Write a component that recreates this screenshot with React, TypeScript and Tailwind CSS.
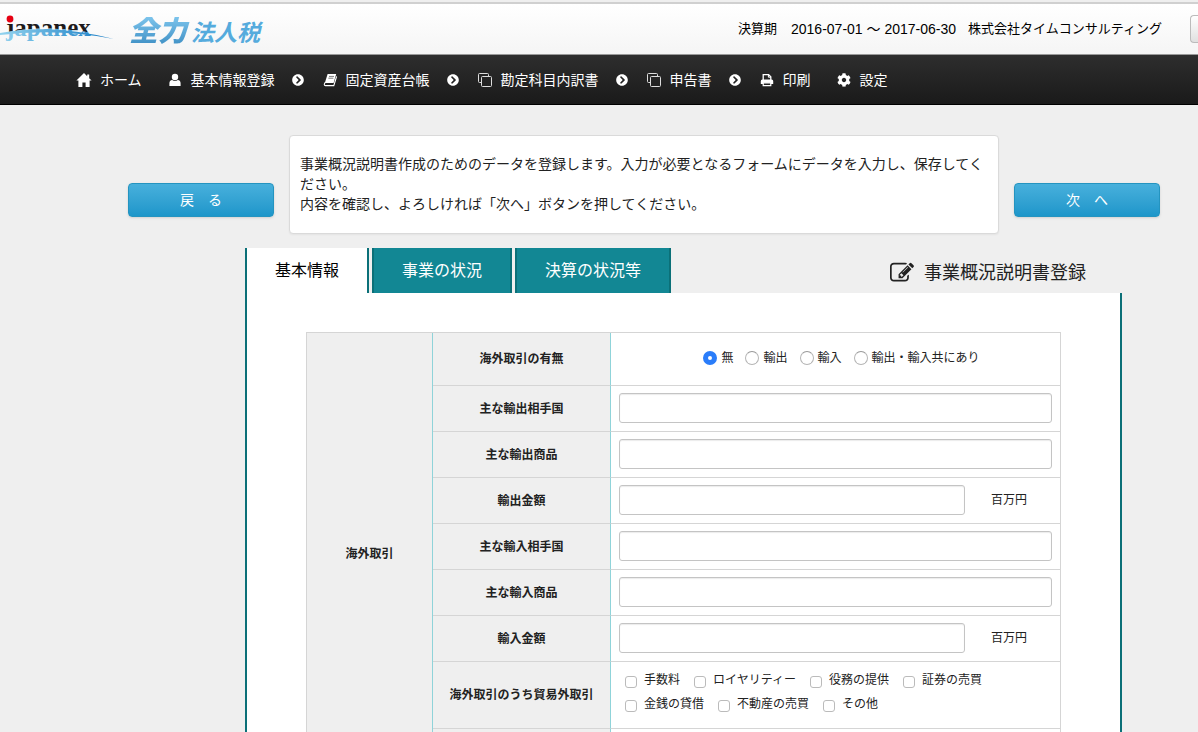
import React, { useState } from "react";
import { FaChevronCircleRight, FaCog } from "react-icons/fa";

const HomeIcon = () => (
  <svg viewBox="0 0 14 14" className="w-[14px] h-[14px] shrink-0 overflow-visible" fill="currentColor">
    <path d="M7 0 L-.6 7.6 H1.4 V14 H5.4 V9.4 H8.6 V14 H12.6 V7.6 H14.6 L12.2 5.2 V1.4 H10.2 V3.2 Z" />
  </svg>
);

const UserIcon = () => (
  <svg viewBox="0 0 14 14" className="w-[14px] h-[14px] shrink-0" fill="currentColor">
    <circle cx="7" cy="4" r="3.2" />
    <path d="M1.4 13 V10.4 Q1.4 7.4 4.2 7 Q7 9 9.8 7 Q12.6 7.4 12.6 10.4 V13 Z" />
  </svg>
);

const BookIcon = () => (
  <svg viewBox="0 0 14 14" className="w-[14px] h-[14px] shrink-0">
    <path d="M4.6 1 H13.2 L10.6 10 H1.8 Z" fill="currentColor" />
    <path d="M6 3.4 H11 M5.4 5.2 H10.4" stroke="#222" strokeWidth=".6" />
    <path d="M2 9.4 Q.4 12.6 2.4 12.6 H10.8 L13.6 3.4" fill="none" stroke="currentColor" strokeWidth="1.1" />
  </svg>
);

const CopyIcon = () => (
  <svg viewBox="0 0 14 14" className="w-[14px] h-[14px] shrink-0" fill="none" stroke="#ddd" strokeWidth="1">
    <rect x="3.5" y="3.5" width="10" height="10" rx="1" />
    <path d="M3.5 9.5 H1.5 Q.5 9.5 .5 8.5 V1.5 Q.5 .5 1.5 .5 H9.5 Q10.5 .5 10.5 1.5 V3.5" />
  </svg>
);

const PrintIcon = () => (
  <svg viewBox="0 0 14 14" className="w-[14px] h-[14px] shrink-0">
    <path d="M3.2 7 V1.6 H8.6 L10.8 3.8 V7" fill="none" stroke="currentColor" strokeWidth="1.3" />
    <path d="M8.4 1.4 V4.2 H11" fill="none" stroke="currentColor" strokeWidth="1" />
    <path d="M.8 11 V8 Q.8 6.4 2.4 6.4 H11.6 Q13.2 6.4 13.2 8 V11 Z" fill="currentColor" />
    <path d="M3.2 9.8 H10.8 V12.6 H3.2 Z" fill="#222" stroke="currentColor" strokeWidth="1.2" />
  </svg>
);

const EditIcon = () => (
  <svg viewBox="0 0 1792 1792" className="w-6 h-6 shrink-0" fill="currentColor">
    <path d="M888 1184l116-116-152-152-116 116v56h96v96h56zm440-720q-16-16-33 1l-350 350q-17 17-1 33t33-1l350-350q17-17 1-33zm80 594v190q0 119-84.5 203.5t-203.5 84.5h-832q-119 0-203.5-84.5t-84.5-203.5v-832q0-119 84.5-203.5t203.5-84.5h832q63 0 117 25 15 7 18 23 3 17-9 29l-49 49q-14 14-32 8-23-6-45-6h-832q-66 0-113 47t-47 113v832q0 66 47 113t113 47h832q66 0 113-47t47-113v-126q0-13 9-22l64-64q15-15 35-7t20 29zm-96-738l288 288-672 672h-288v-288zm444 132l-92 92-288-288 92-92q28-28 68-28t68 28l152 152q28 28 28 68t-28 68z" />
  </svg>
);

// Upper half of the word is black, the part under the wave is blue
const JapanexLogo = () => (
  <svg viewBox="0 0 116 40" className="w-[116px] h-10 shrink-0" role="img" aria-label="japanex">
    <defs>
      <linearGradient id="wave" gradientUnits="userSpaceOnUse" x1="0" y1="0" x2="100" y2="0">
        <stop offset="0" stopColor="#93d3ee" />
        <stop offset="1" stopColor="#2183c8" />
      </linearGradient>
      <clipPath id="above">
        <path d="M0 0 H116 V30 Q55 12 0 25 Z" />
      </clipPath>
      <clipPath id="below">
        <path d="M0 25 Q55 12 116 30 V40 H0 Z" />
      </clipPath>
    </defs>
    <g fontFamily="'Liberation Serif', serif" fontWeight="bold" fontSize="25">
      <text x="6" y="27" fill="#1d1a1b" clipPath="url(#above)">japanex</text>
      <text x="6" y="27" fill="url(#wave)" clipPath="url(#below)" aria-hidden="true">japanex</text>
    </g>
    <path d="M0 24 Q52 14 114 30 Q58 19 0 26 Z" fill="url(#wave)" />
    <circle cx="10" cy="10" r="3.4" fill="#e60012" />
  </svg>
);

const navItems = [
  { label: "ホーム", icon: <HomeIcon />, arrow: false },
  { label: "基本情報登録", icon: <UserIcon />, arrow: true },
  { label: "固定資産台帳", icon: <BookIcon />, arrow: true },
  { label: "勘定科目内訳書", icon: <CopyIcon />, arrow: true },
  { label: "申告書", icon: <CopyIcon />, arrow: true },
  { label: "印刷", icon: <PrintIcon />, arrow: false },
  { label: "設定", icon: <FaCog className="w-[14px] h-[14px] shrink-0" />, arrow: false },
];

const tabs = ["基本情報", "事業の状況", "決算の状況等"];

const textRows = [
  { id: "exportCountry", label: "主な輸出相手国", unit: "" },
  { id: "exportItem", label: "主な輸出商品", unit: "" },
  { id: "exportAmount", label: "輸出金額", unit: "百万円" },
  { id: "importCountry", label: "主な輸入相手国", unit: "" },
  { id: "importItem", label: "主な輸入商品", unit: "" },
  { id: "importAmount", label: "輸入金額", unit: "百万円" },
];

const tradeOptions = ["無", "輸出", "輸入", "輸出・輸入共にあり"];

const nonTradeOptions = [
  ["手数料", "ロイヤリティー", "役務の提供", "証券の売買"],
  ["金銭の貸借", "不動産の売買", "その他"],
];

const thClass = "bg-[#efefef] border-b border-[#d5d5d5] border-r border-r-[#8fd3d9] text-center font-bold";
const tdClass = "border-b border-[#d5d5d5] border-r";

const StepButton: React.FC<{ children: React.ReactNode }> = ({ children }) => (
  <button className="w-full h-[34px] mt-12 rounded border border-[#2494c0] bg-linear-to-b from-[#47b0dc] to-[#1c96ca] text-sm text-white shadow-sm whitespace-pre">
    {children}
  </button>
);

const App: React.FC = () => {
  const [trade, setTrade] = useState("無");
  const [activeTab, setActiveTab] = useState("基本情報");

  return (
    <div className="min-h-screen bg-[#efefef] text-[#222] font-['Liberation_Sans','Noto_Sans_CJK_JP',sans-serif]">
      {/* Header */}
      <header className="pt-[2px]">
        <div className="h-[53px] border-t-2 border-t-[#d0d0d0] border-b border-b-[#999] bg-linear-to-b from-white to-[#f5f5f5] flex items-center justify-between overflow-hidden">
          <div className="flex items-center gap-[13px]">
            <JapanexLogo />
            <div className="flex items-baseline pt-1 italic font-bold leading-none">
              <span className="pr-1 text-[29px] font-black bg-linear-to-b from-[#7cc4ec] to-[#3d8fc4] bg-clip-text text-transparent">全力</span>
              <span className="pr-2 text-[23px] text-[#55abdd]">法人税</span>
            </div>
          </div>
          <div className="flex items-center text-[13px] text-black whitespace-nowrap">
            <span className="mr-[14px]">決算期</span>
            <span className="mr-3 text-sm">2016-07-01 ～ 2017-06-30</span>
            <span className="mr-7">株式会社タイムコンサルティング</span>
            <button aria-label="メニュー" className="w-2 h-7 rounded-l border border-r-0 border-[#bbb] bg-linear-to-b from-white to-[#e0e0e0]" />
          </div>
        </div>
      </header>

      {/* Global navigation */}
      <nav className="h-[50px] border-b border-black bg-linear-to-b from-[#2e2e2e] to-[#1a1a1a]">
        <ul className="h-full pl-[68px] flex items-center text-sm text-white whitespace-nowrap">
          {navItems.map((item) => (
            <li key={item.label} className="flex items-center">
              <a href="#" className="flex items-center gap-[9px] pl-[9px] pr-[17px]">
                {item.icon}
                {item.label}
              </a>
              {item.arrow && <FaChevronCircleRight className="w-3 h-3 mr-[10px]" />}
            </li>
          ))}
        </ul>
      </nav>

      <main className="pt-[30px] pl-[128px] pr-[38px]">
        {/* Description */}
        <div className="grid grid-cols-[146px_1fr_146px] gap-[15px] items-start">
          <StepButton>戻　る</StepButton>
          <div className="h-[99px] px-[10px] pt-[18px] bg-white border border-[#dadada] rounded shadow-xs text-sm leading-5">
            <p>事業概況説明書作成のためのデータを登録します。入力が必要となるフォームにデータを入力し、保存してください。</p>
            <p>内容を確認し、よろしければ「次へ」ボタンを押してください。</p>
          </div>
          <StepButton>次　へ</StepButton>
        </div>

        <div className="mt-[14px] ml-[117px] mr-[38px]">
          {/* Tabs */}
          <div className="flex items-stretch justify-between h-[45px]">
            <div className="flex gap-[3px]" role="tablist">
              {tabs.map((tab) => (
                <button
                  key={tab}
                  role="tab"
                  aria-selected={tab === activeTab}
                  onClick={() => setActiveTab(tab)}
                  className={`px-7 border-x-2 border-[#0b7078] text-base ${
                    tab === activeTab ? "bg-white text-black" : "bg-[#128794] text-white"
                  }`}
                >
                  {tab}
                </button>
              ))}
            </div>
            <h1 className="flex items-center gap-[10px] pr-9 pt-1 text-lg">
              <EditIcon />
              事業概況説明書登録
            </h1>
          </div>

          {/* Form */}
          <div className="border-x-2 border-[#0b7078] bg-white px-[59px] pt-[39px] pb-10">
            <table className="w-full table-fixed border-separate border-spacing-0 border-t border-l border-[#d5d5d5] text-xs">
              <colgroup>
                <col className="w-[126px]" />
                <col className="w-[178px]" />
                <col />
              </colgroup>
              <tbody>
                <tr>
                  <th rowSpan={9} className={thClass}>海外取引</th>
                  <th className={thClass}>海外取引の有無</th>
                  <td className={`${tdClass} h-[53px]`}>
                    <div className="flex justify-center items-center gap-3 pl-3 pb-[2px]">
                      {tradeOptions.map((option) => (
                        <label key={option} className="flex items-center gap-1">
                          <input
                            type="radio"
                            name="trade"
                            checked={trade === option}
                            onChange={() => setTrade(option)}
                            className="appearance-none w-[14px] h-[14px] rounded-full border border-[#b5b5b5] border-t-[#999] bg-white checked:border-[5px] checked:border-[#2a7dfa]"
                          />
                          {option}
                        </label>
                      ))}
                    </div>
                  </td>
                </tr>
                {textRows.map((row) => (
                  <tr key={row.id}>
                    <th className={thClass}>
                      <label htmlFor={row.id}>{row.label}</label>
                    </th>
                    <td className={`${tdClass} h-[46px] px-2 pb-px`}>
                      <div className="flex items-center">
                        <input
                          id={row.id}
                          type="text"
                          className="flex-1 min-w-0 h-[30px] px-2 rounded-[3px] border border-[#c4c4c4] bg-white shadow-[inset_0_1px_1px_rgba(0,0,0,0.08)]"
                        />
                        {row.unit && <span className="pl-[26px] pr-[25px]">{row.unit}</span>}
                      </div>
                    </td>
                  </tr>
                ))}
                <tr>
                  <th className={thClass}>海外取引のうち貿易外取引</th>
                  <td className={`${tdClass} h-[67px] pl-[14px] pb-[6px]`}>
                    {nonTradeOptions.map((line) => (
                      <div key={line[0]} className="flex gap-[14px] h-6">
                        {line.map((option) => (
                          <label key={option} className="flex items-center gap-[7px]">
                            <input
                              type="checkbox"
                              className="appearance-none w-3 h-3 mt-1 rounded-[3px] border border-[#bbb] bg-white checked:bg-[#2a7dfa]"
                            />
                            {option}
                          </label>
                        ))}
                      </div>
                    ))}
                  </td>
                </tr>
                <tr>
                  <th className={thClass}></th>
                  <td className={`${tdClass} h-[46px]`}></td>
                </tr>
              </tbody>
            </table>
          </div>
        </div>
      </main>
    </div>
  );
};

export default App;
